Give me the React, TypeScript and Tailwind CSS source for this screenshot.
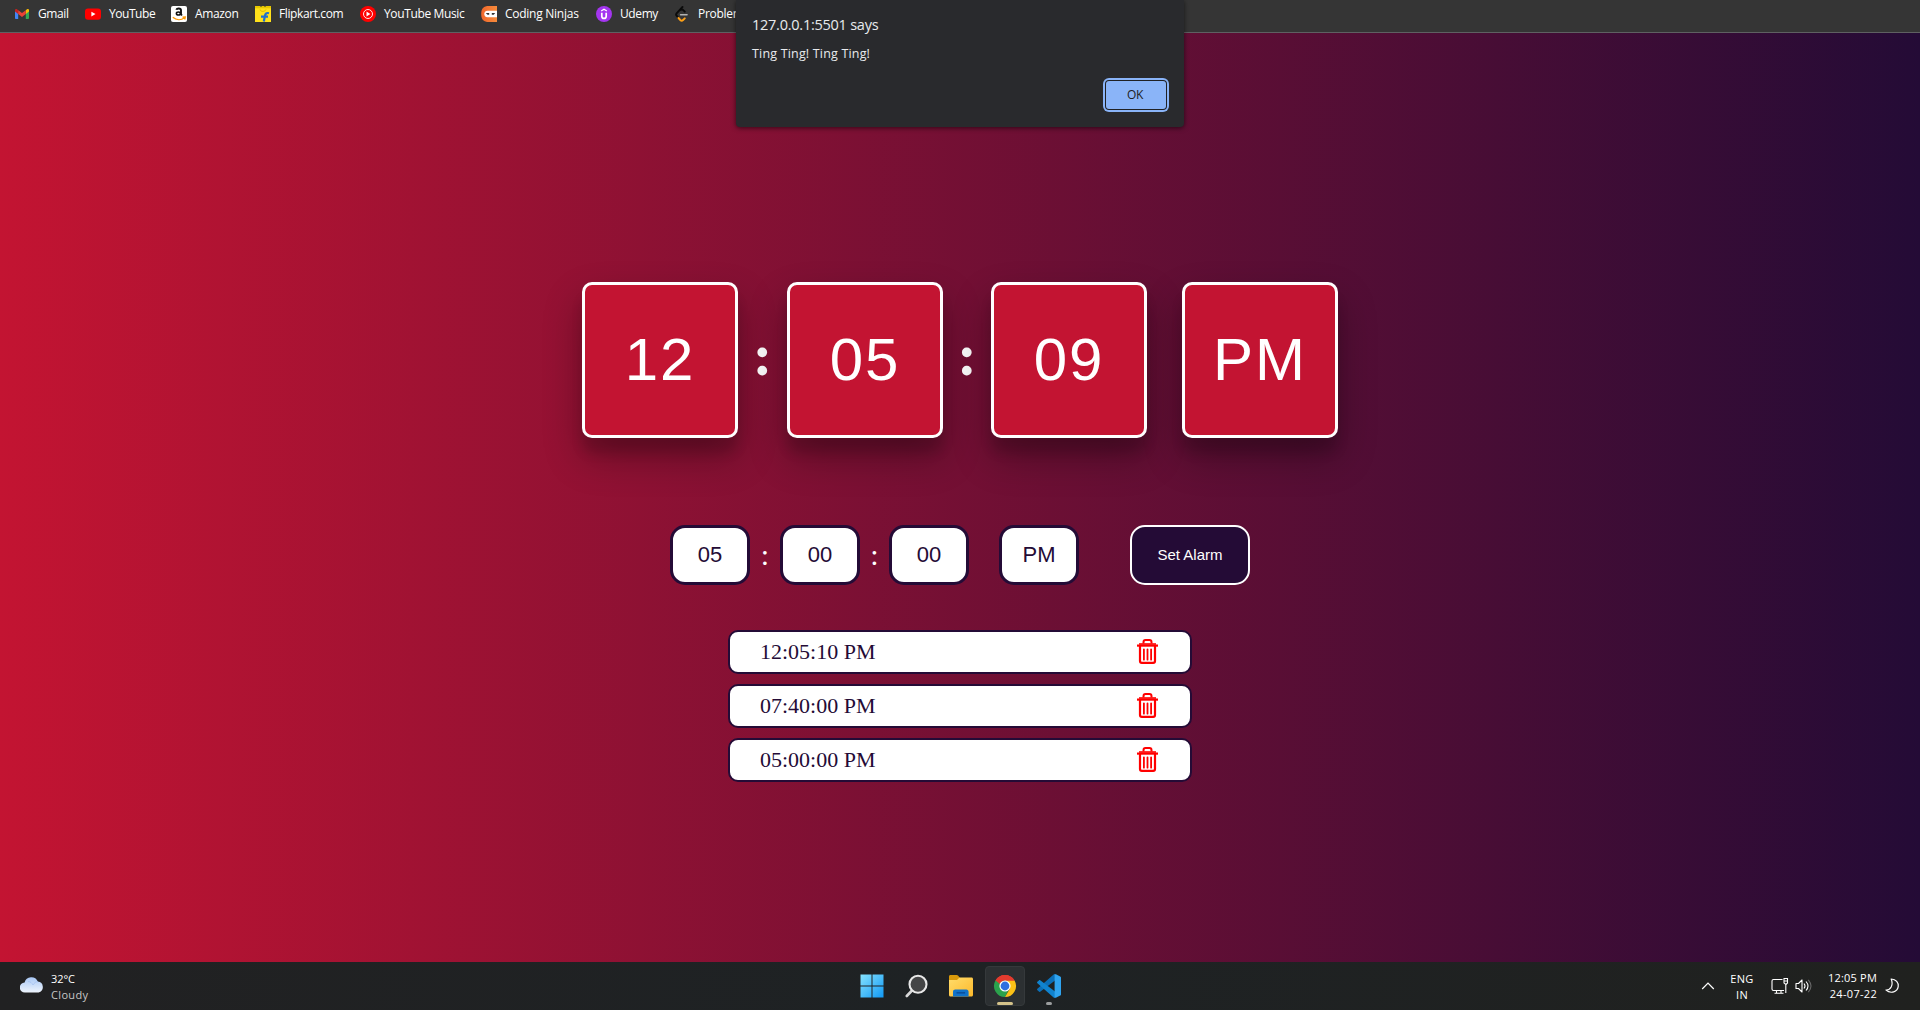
import React from "react";

const ui = "font-['Open_Sans','Noto_Sans',sans-serif]";

function GmailIcon() {
  return (
    <svg width="16" height="16" viewBox="0 0 16 16">
      <path d="M1 4v8.2c0 .5.4.8.9.8H4.200V7z" fill="#4285f4" />
      <path d="M15 4v8.2c0 .5-.4.8-.9.8h-2.300V7z" fill="#34a853" />
      <path d="M11.800 4.200 13 3.200c.8-.6 2-.1 2 1v1.200L11.800 8z" fill="#fbbc04" />
      <path d="M4.200 4.200 3 3.200c-.8-.6-2-.1-2 1v1.200L4.200 8z" fill="#c5221f" />
      <path d="M4.200 4.200 8 7.100l3.800-2.900V8L8 10.900 4.200 8z" fill="#ea4335" />
    </svg>
  );
}
function YouTubeIcon() {
  return (
    <svg width="16" height="16" viewBox="0 0 16 16">
      <rect x="0" y="2.400" width="16" height="11.400" rx="3" fill="#f00" />
      <path d="M6.400 5.700v4.800L10.500 8.100z" fill="#fff" />
    </svg>
  );
}
function AmazonIcon() {
  return (
    <svg width="16" height="16" viewBox="0 0 16 16">
      <rect width="16" height="16" rx="2" fill="#fff" />
      <path d="M5.300 3.700C5.800 2.300 9.900 1.800 10 4.400v3.800l.9 1.300" stroke="#111" strokeWidth="1.900" fill="none" />
      <ellipse cx="7.400" cy="7.500" rx="2" ry="1.500" fill="none" stroke="#111" strokeWidth="1.600" />
      <path d="M1.800 11.200c3.500 3 8.200 3 11.500.8M11.500 11.200l2.800-.2-.6 2.500" stroke="#f90" strokeWidth="1.300" fill="none" />
    </svg>
  );
}
function FlipkartIcon() {
  return (
    <svg width="16" height="16" viewBox="0 0 16 16">
      <path d="M0 0h5l1 1 1-1h2l1 1 1-1h5v3H0z" fill="#e8c800" />
      <path d="M0 2.300h16V16H0z" fill="#ffe11b" />
      <path d="M5 3.500c.5 2.500 5 2.500 6 0" stroke="#e0b800" fill="none" />
      <path d="M14 7.200C11 6.400 10.300 8 9.800 10.500L8.800 15.500M6 10.600h7" stroke="#1f6fd0" strokeWidth="2.200" fill="none" />
    </svg>
  );
}
function YouTubeMusicIcon() {
  return (
    <svg width="16" height="16" viewBox="0 0 16 16">
      <circle cx="8" cy="8" r="8" fill="#f00" />
      <circle cx="8" cy="8" r="4.500" fill="none" stroke="#fff" strokeWidth=".9" />
      <path d="M6.500 5.600v4.800L10.400 8z" fill="#fff" />
    </svg>
  );
}
function NinjasIcon() {
  return (
    <svg width="16" height="16" viewBox="0 0 16 16">
      <defs>
        <linearGradient id="ninja" x1="0" x2="1">
          <stop stopColor="#f0662a" />
          <stop offset="1" stopColor="#f78c3c" />
        </linearGradient>
      </defs>
      <path d="M16 0v16H8C2.500 16 .2 13.500.2 8S2.500 0 8 0z" fill="url(#ninja)" />
      <path d="M16 4.800v6.400H6.500C2.200 11.200 2.200 4.800 6.500 4.800z" fill="#fff" />
      <path d="M4.800 7h3.400v1.800h-1.700zM10.800 7h3.400l-1.500 1.800h-1.900z" fill="#333" />
    </svg>
  );
}
function UdemyIcon() {
  return (
    <svg width="16" height="16" viewBox="0 0 16 16">
      <circle cx="8" cy="8" r="8" fill="#a435f0" />
      <path d="M5.200 5 8 3.300 10.800 5" stroke="#fff" strokeWidth="1.300" fill="none" />
      <path d="M5.800 6.700v3.500c0 3 4.400 3 4.400 0V6.700" stroke="#fff" strokeWidth="1.700" fill="none" />
    </svg>
  );
}
function LeetCodeIcon() {
  return (
    <svg width="16" height="16" viewBox="0 0 16 16" fill="none" strokeWidth="1.900" strokeLinecap="round">
      <path d="M8.500 1 2.600 7.300C2 8 2 9 2.600 9.700L4.500 12" stroke="#0b0b0b" />
      <path d="M10.800 5.700 9.300 4.200c-.7-.7-1.600-.8-2.500-.4" stroke="#0b0b0b" />
      <path d="m4.500 12 1.800 2c.8.8 2 .8 2.800 0l1.700-1.700" stroke="#ffa116" />
      <path d="M6.500 8.800h6.600" stroke="#b3b3b3" strokeWidth="1.400" />
    </svg>
  );
}

const bookmarks = [
  { label: "Gmail", Icon: GmailIcon, size: "w-[71px]", track: "tracking-[-0.4px]" },
  { label: "YouTube", Icon: YouTubeIcon, size: "w-[86px]", track: "tracking-[-0.45px]" },
  { label: "Amazon", Icon: AmazonIcon, size: "w-[84px]", track: "tracking-[-0.35px]" },
  { label: "Flipkart.com", Icon: FlipkartIcon, size: "w-[105px]", track: "tracking-[-0.4px]" },
  { label: "YouTube Music", Icon: YouTubeMusicIcon, size: "w-[121px]", track: "tracking-[-0.36px]" },
  { label: "Coding Ninjas", Icon: NinjasIcon, size: "w-[115px]", track: "tracking-[-0.26px]" },
  { label: "Udemy", Icon: UdemyIcon, size: "w-[78px]", track: "tracking-[-0.4px]" },
  { label: "Problems", Icon: LeetCodeIcon, size: "w-[90px]", track: "tracking-[-0.3px]" },
];

function BookmarksBar() {
  return (
    <header className={`${ui} flex h-[33px] items-start overflow-hidden border-b border-[#5f6062] bg-[#353535] pl-[14px] pt-[6px] text-[12px] text-white`}>
      {bookmarks.map(({ label, Icon, size, track }) => (
        <div key={label} className={`flex h-4 shrink-0 items-center gap-2 whitespace-nowrap ${size}`}>
          <Icon />
          <span className={track}>{label}</span>
        </div>
      ))}
    </header>
  );
}

function AlertDialog() {
  return (
    <div role="alertdialog" className={`${ui} absolute left-[736px] top-0 flex h-[127px] w-[448px] flex-col rounded-b-[4px] bg-[#292a2d] px-4 text-[#e8eaed] shadow-[0_1px_5px_rgba(0,0,0,0.6)]`}>
      <h1 className="mt-[15px] whitespace-nowrap text-[14.500px] leading-[20px] tracking-[-0.25px]">127.0.0.1:5501 says</h1>
      <p className="mt-[10px] whitespace-nowrap text-[12.500px] leading-[18px] tracking-[0.18px]">Ting Ting! Ting Ting!</p>
      <button className="ml-auto mr-[2px] mt-[18px] h-[28px] w-[60px] rounded-[3px] bg-[#8ab4f8] pr-0.5 text-[12px] tracking-[-0.4px] text-[#202124] ring-2 ring-[#8ab4f8] ring-offset-1 ring-offset-[#202124]">
        OK
      </button>
    </div>
  );
}

function ClockTile({ children, className = "" }: { children: string; className?: string }) {
  return (
    <div className={`flex h-[156px] w-[156px] items-center justify-center rounded-[10px] border-[3px] border-white bg-[#c31432] text-[60px] leading-[68px] tracking-[2px] shadow-[0_19px_38px_rgba(0,0,0,0.3),0_15px_12px_rgba(0,0,0,0.12)] ${className}`}>
      {children}
    </div>
  );
}

function ClockColon({ className }: { className: string }) {
  return (
    <span className={`pb-[11px] text-center font-['Liberation_Serif',serif] text-[60px] font-bold leading-[68px] text-[#f8f8f8] ${className}`}>:</span>
  );
}

function AlarmField({ children, className = "" }: { children: string; className?: string }) {
  return (
    <div className={`flex h-[60px] w-[80px] items-center justify-center rounded-[15px] border-[3px] border-[#240b36] bg-white pb-[2px] text-[22px] text-[#240b36] ${className}`}>
      {children}
    </div>
  );
}

function FieldColon({ className }: { className: string }) {
  return <span className={`text-center font-['Liberation_Serif',serif] text-[30px] leading-[34px] ${className}`}>:</span>;
}

function TrashIcon() {
  return (
    <svg className="mb-[2px]" width="21" height="25" viewBox="0 0 21 25" fill="none" stroke="#f00">
      <path d="M6.500 4.500V3.200c0-1.300.8-2.200 2-2.200h4c1.200 0 2 .9 2 2.200v1.300" strokeWidth="2" />
      <path d="M2 5h17" strokeWidth="1.600" />
      <path d="M0 6.600h21" strokeWidth="2.200" />
      <path d="M3 7v15c0 1.200.8 1.900 1.800 1.900h11.400c1 0 1.800-.7 1.800-1.900V7" strokeWidth="2.200" />
      <path d="M6.900 10.300v10.400M10.500 10.300v10.400M14.100 10.300v10.400" strokeWidth="1.800" strokeLinecap="round" />
    </svg>
  );
}

function AlarmRow({ time }: { time: string }) {
  return (
    <li className="flex h-[44px] items-center justify-between rounded-[10px] border-2 border-[#240b36] bg-white pl-[30px] pr-[32px] font-['Liberation_Serif',serif] text-[22px] text-[#240b36]">
      <span className="pb-px">{time}</span>
      <TrashIcon />
    </li>
  );
}

function CloudIcon() {
  return (
    <svg width="24" height="16" viewBox="0 0 24 16">
      <defs>
        <linearGradient id="cloud" x1="0" y1="0" x2="0" y2="1">
          <stop stopColor="#a9c8f5" />
          <stop offset="1" stopColor="#eef4fc" />
        </linearGradient>
      </defs>
      <path d="M5 15.500a5 5 0 0 1-.4-10A7 7 0 0 1 17.800 4.500 5.600 5.600 0 0 1 18.600 15.500z" fill="url(#cloud)" />
      <path d="M8 4.500c2.500 0 4 1.500 5 3.500 1-2 3-3.500 5-3.300" fill="none" stroke="#9dbdf0" strokeWidth="1" opacity=".6" />
    </svg>
  );
}

function WindowsIcon() {
  return (
    <svg width="24" height="24" viewBox="0 0 24 24">
      <defs>
        <linearGradient id="win" x1="0" y1="0" x2="1" y2="1">
          <stop stopColor="#86e2fd" />
          <stop offset="1" stopColor="#1199f5" />
        </linearGradient>
      </defs>
      <path d="M.5.5h11v11H.5zM12.500.5h11v11h-11zM.5 12.500h11v11H.5zM12.500 12.500h11v11h-11z" fill="url(#win)" />
    </svg>
  );
}
function SearchIcon() {
  return (
    <svg width="24" height="24" viewBox="0 0 24 24">
      <path d="m7 16.500-5.200 5.500" stroke="#d8d8d8" strokeWidth="2.600" strokeLinecap="round" />
      <circle cx="13" cy="10.200" r="8.500" fill="#444546" stroke="#e8e8e8" strokeWidth="2.100" />
    </svg>
  );
}
function FolderIcon() {
  return (
    <svg width="24" height="24" viewBox="0 0 24 24">
      <defs>
        <linearGradient id="folder" x1="0" y1="0" x2="1" y2="1">
          <stop stopColor="#ffdc6b" />
          <stop offset="1" stopColor="#fdb92b" />
        </linearGradient>
      </defs>
      <path d="M0 2.500C0 1.600.6 1 1.500 1h6.200c.5 0 1 .2 1.300.6L11 4v4H0z" fill="#d99a0b" />
      <path d="M0 6h8l2.500-2.500h12c.9 0 1.500.6 1.500 1.500v16c0 .9-.6 1.500-1.500 1.500h-21C.6 22.500 0 21.900 0 21z" fill="url(#folder)" />
      <path d="M4 22.500v-4.700c0-1.400 1-2.300 2.300-2.300h11c1.400 0 2.300 1 2.300 2.300v4.700z" fill="#1072c9" />
      <path d="M7.500 18.800h8.600" stroke="#0a4f9c" strokeWidth="1.600" />
    </svg>
  );
}
function ChromeIcon() {
  return (
    <svg width="24" height="24" viewBox="0 0 24 24">
      <path d="M12 12 2.470 6.500A11 11 0 0 1 21.530 6.500z" fill="#e23b2e" />
      <path d="M12 12 2.470 6.500A11 11 0 0 0 12 23l4.300-8.500z" fill="#2ba24c" />
      <path d="M12 6.500h9.530A11 11 0 0 1 12 23l4.760-8.250z" fill="#fbc116" />
      <path d="M12 6.500H2.470L7.240 14.750z" fill="#2ba24c" />
      <path d="M2.470 6.500A11 11 0 0 1 21.530 6.500H12A5.500 5.500 0 0 0 7 10z" fill="#e23b2e" />
      <circle cx="12" cy="12" r="5.600" fill="#fff" />
      <circle cx="12" cy="12" r="4.400" fill="#2f6fe0" />
    </svg>
  );
}
function VSCodeIcon() {
  return (
    <svg width="24" height="24" viewBox="0 0 24 24">
      <path d="M18 .3v6.200L3.200 17.700c-.4.300-.9.300-1.300-.1L.4 16.200c-.5-.4-.5-1 0-1.400L16.600.5c.4-.4.900-.4 1.400-.2z" fill="#0b6fb8" />
      <path d="M18 23.700v-6.200L3.200 6.300c-.4-.3-.9-.3-1.300.1L.4 7.800c-.5.400-.5 1 0 1.400l16.200 14.300c.4.400.9.400 1.400.2z" fill="#1083cf" />
      <path d="M17.600 23.700c.4.200.9.200 1.300 0l4.300-2.100c.5-.2.800-.7.800-1.200V3.600c0-.5-.3-1-.8-1.200L18.900.3c-.4-.2-.9-.2-1.300 0z" fill="#2fa4f0" />
    </svg>
  );
}

function Taskbar() {
  return (
    <footer className={`${ui} grid h-[48px] grid-cols-[1fr_240px_1fr] bg-linear-to-r from-[#212122] via-[#1e2224] to-[#20211f] text-[11px] text-white`}>
      <div className="flex items-start pl-5">
        <div className="mt-[15px]">
          <CloudIcon />
        </div>
        <div className="ml-[7px] mt-[9px] leading-[16px]">
          <div className="tracking-[-0.1px]">32°C</div>
          <div className="tracking-[0.35px] text-[#c6c6c6]">Cloudy</div>
        </div>
      </div>
      <nav className="flex items-start pt-1">
        <div className="ml-[12px] flex h-10 w-10 items-center justify-center"><WindowsIcon /></div>
        <div className="ml-[5px] flex h-10 w-10 items-center justify-center"><SearchIcon /></div>
        <div className="ml-1 flex h-10 w-10 items-center justify-center"><FolderIcon /></div>
        <div className="ml-1 flex h-10 w-10 flex-col items-center rounded-[4px] border border-[#35393b] bg-[#2c3032] pt-[7px]">
          <ChromeIcon />
          <div className="mt-[4px] h-[3px] w-4 shrink-0 rounded-full bg-[#d3c28a]" />
        </div>
        <div className="ml-1 flex h-10 w-10 flex-col items-center pt-2">
          <VSCodeIcon />
          <div className="mt-[4px] h-[3px] w-[6px] shrink-0 rounded-full bg-[#9b9d9e]" />
        </div>
      </nav>
      <div className="flex items-start justify-end pr-[20px]">
        <svg className="mt-[20px]" width="14" height="8" viewBox="0 0 14 8" fill="none" stroke="#fff" strokeWidth="1.200"><path d="m1.200 7 5.800-5.800L12.800 7" /></svg>
        <div className="ml-[14px] mt-[9px] w-[26px] text-center leading-[16px]">
          <div className="tracking-[0.3px]">ENG</div>
          <div className="tracking-[0.3px]">IN</div>
        </div>
        <svg className="ml-[16px] mt-[15px]" width="18" height="18" viewBox="0 0 18 18" fill="none" stroke="#fff" strokeWidth="1.100">
          <path d="M11.500 2.500H2.500c-.8 0-1.500.6-1.500 1.500v8c0 .9.700 1.500 1.500 1.500H13M5.500 13.500V16M10 13.500V16M3.500 16.300h9" />
          <path d="M13 1.500h3.500V6L15 7.500 13 6zM13 4h3.500M14.800 7.500V16" />
        </svg>
        <svg className="ml-[6px] mt-[16px]" width="17" height="16" viewBox="0 0 17 16" fill="none" stroke="#fff" strokeWidth="1.100">
          <path d="M1 5.500h2.500L7 2v12l-3.500-3.500H1z" strokeLinejoin="round" />
          <path d="M9 5.500c1.200 1.500 1.200 3.500 0 5M11 3.500c2.400 2.700 2.400 6.300 0 9" />
          <path d="M13.300 1.800c3.300 3.800 3.300 8.600 0 12.400" stroke="#666" />
        </svg>
        <div className="ml-[11px] mt-[8px] flex w-[54px] flex-col items-end whitespace-nowrap leading-[16px]">
          <div className="tracking-[0.2px]">12:05 PM</div>
          <div className="tracking-[0.3px]">24-07-22</div>
        </div>
        <svg className="ml-[8px] mt-[16px]" width="15" height="16" viewBox="0 0 15 16" fill="none" stroke="#fff" strokeWidth="1.200">
          <path d="M6.200 1c4.800.2 7.600 3.800 7 7.700C12.500 13.500 6 16.500 1 12c4.300.2 7.800-4.500 5.200-11z" strokeLinejoin="round" />
        </svg>
      </div>
    </footer>
  );
}

export default function App() {
  return (
    <div className="relative flex h-[1010px] w-[1920px] flex-col overflow-hidden">
      <BookmarksBar />
      <main className="flex h-[929px] flex-col items-center bg-linear-to-r/srgb from-[#c31432] to-[#240b36] pt-[249px] font-['Liberation_Sans',Arial,sans-serif] text-white">
        <section className="flex items-center">
          <ClockTile>12</ClockTile>
          <ClockColon className="w-[49px]" />
          <ClockTile>05</ClockTile>
          <ClockColon className="w-[48px]" />
          <ClockTile>09</ClockTile>
          <ClockTile className="ml-[35px]">PM</ClockTile>
        </section>
        <section className="mt-[87px] flex items-center">
          <AlarmField>05</AlarmField>
          <FieldColon className="w-[30px]" />
          <AlarmField>00</AlarmField>
          <FieldColon className="w-[29px]" />
          <AlarmField>00</AlarmField>
          <AlarmField className="ml-[30px]">PM</AlarmField>
          <button className="ml-[51px] h-[60px] w-[120px] rounded-[15px] border-2 border-white bg-[#240b36] text-[15px]">Set Alarm</button>
        </section>
        <ul className="mt-[45px] flex w-[464px] flex-col gap-[10px]">
          <AlarmRow time="12:05:10 PM" />
          <AlarmRow time="07:40:00 PM" />
          <AlarmRow time="05:00:00 PM" />
        </ul>
      </main>
      <Taskbar />
      <AlertDialog />
    </div>
  );
}
